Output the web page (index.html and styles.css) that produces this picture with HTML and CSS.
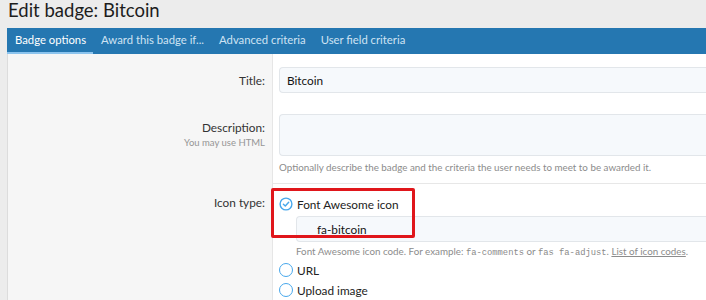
FILE: index.html
```html
<!DOCTYPE html>
<html lang="en">
<head>
    <meta charset="UTF-8">
    <meta name="viewport" content="width=device-width, initial-scale=1.0">
    <title>Edit badge: Bitcoin</title>
    <link rel="stylesheet" href="styles.css">
</head>
<body>
    <div class="page">
        <h1>Edit badge: Bitcoin</h1>
        <div class="block">
            <div class="tabs">
                <a class="tab active">Badge options</a>
                <a class="tab">Award this badge if...</a>
                <a class="tab">Advanced criteria</a>
                <a class="tab">User field criteria</a>
            </div>
            <div class="row row-title">
                <div class="label">Title:</div>
                <div class="field">
                    <input class="input" type="text" value="Bitcoin">
                </div>
            </div>
            <div class="row row-desc">
                <div class="label label-top">
                    Description:
                    <span class="hint">You may use HTML</span>
                </div>
                <div class="field">
                    <textarea class="input textarea"></textarea>
                    <div class="explain">Optionally describe the badge and the criteria the user needs to meet to be awarded it.</div>
                </div>
            </div>
            <div class="row row-icon">
                <div class="label label-radio">Icon type:</div>
                <div class="field">
                    <div class="highlight"></div>
                    <label class="choice">
                        <span class="radio checked">
                            <svg viewBox="0 0 14 14" width="14" height="14">
                                <circle cx="7" cy="7" r="5.9" fill="none" stroke="#47a7eb" stroke-width="1.4"/>
                                <path d="M4.4 7.2 L6.3 9 L9.7 5.2" fill="none" stroke="#47a7eb" stroke-width="1.4" stroke-linecap="round" stroke-linejoin="round"/>
                            </svg>
                        </span>
                        Font Awesome icon
                    </label>
                    <div class="dependent">
                        <input class="input input-icon" type="text" value="fa-bitcoin">
                        <div class="explain">Font Awesome icon code. For example: <code>fa-comments</code> or <code>fas fa-adjust</code>. <a class="link">List of icon codes</a>.</div>
                    </div>
                    <label class="choice">
                        <span class="radio"></span>
                        URL
                    </label>
                    <label class="choice">
                        <span class="radio"></span>
                        Upload image
                    </label>
                </div>
            </div>
        </div>
    </div>
</body>
</html>
```

FILE: styles.css
```css
body {
    margin: 0;
    background: #ececec;
    font-family: Lato, 'Noto Sans', sans-serif;
    color: #141414;
    overflow: hidden;
}
.page {
    padding: 0 0 0 7px;
}
h1 {
    font-size: 18.5px;
    font-weight: 400;
    margin: 0;
    padding: 0 0 0 1px;
    height: 28px;
    line-height: 21px;
    color: #1d1d1d;
}
.block {
    border-left: 1px solid #dcdcdc;
    background: linear-gradient(to right, #f6f6f6 264px, #e6e6e6 264px, #e6e6e6 265px, #fff 265px);
    min-height: 300px;
}
.tabs {
    display: flex;
    background: #2577b1;
    height: 26px;
    margin-left: -1px;
}
.tab {
    color: #cfe3f3;
    font-size: 11.3px;
    line-height: 24px;
    padding: 0 7px 0 8px;
    border-bottom: 2px solid transparent;
}
.tab.active {
    color: #fff;
    border-bottom-color: #8cc4ee;
}
.row {
    display: grid;
    grid-template-columns: 264px 1fr;
}
.label {
    text-align: right;
    padding-right: 7px;
    font-size: 11.8px;
    color: #333;
    display: flex;
    flex-direction: column;
    justify-content: center;
    align-items: flex-end;
}
.label-top {
    justify-content: flex-start;
    padding-top: 6px;
}
.label-radio {
    justify-content: flex-start;
    padding-top: 12px;
}
.hint {
    font-size: 9.5px;
    color: #959595;
    margin-top: 2px;
}
.field {
    padding: 0 0 0 7px;
    position: relative;
}
.row-title {
    padding: 13px 0 11px;
}
.row-desc {
    padding: 10px 0 10px;
}
.row-desc .field {
    border-bottom: 1px solid #e7e7e7;
    padding-bottom: 10px;
    margin-left: 1px;
    padding-left: 6px;
}
.row-desc .label {
    padding-bottom: 10px;
}
.row-icon {
    margin-top: -11px;
}
.row-icon .field {
    padding-top: 11px;
}
.input {
    display: block;
    box-sizing: border-box;
    width: 100%;
    height: 26px;
    border: 1px solid #e2e6ea;
    border-radius: 4px 0 0 4px;
    border-right: none;
    background: #f6f9fc;
    font-family: inherit;
    font-size: 11.8px;
    color: #141414;
    padding: 0 7px;
    outline: none;
}
.textarea {
    height: 42px;
    resize: none;
}
.explain {
    font-size: 9.8px;
    color: #8c8c8c;
    margin-top: 5px;
    white-space: nowrap;
}
code {
    font-family: 'Liberation Mono', 'DejaVu Sans Mono', monospace;
    font-size: 8.8px;
    color: #8a8a8a;
}
.link {
    color: #8c8c8c;
    text-decoration: underline;
}
.choice {
    display: flex;
    align-items: center;
    gap: 4px;
    font-size: 11.8px;
    color: #222;
    height: 20px;
}
.radio {
    width: 14px;
    height: 14px;
    box-sizing: border-box;
    border: 1.4px solid #47a7eb;
    border-radius: 50%;
    display: inline-block;
}
.radio.checked {
    border: none;
}
.radio svg {
    display: block;
}
.dependent {
    padding: 2px 0 0 17px;
}
.dependent .explain {
    margin-top: 2px;
    line-height: 14px;
}
.input-icon {
    padding-left: 20px;
}
.highlight {
    position: absolute;
    left: -1px;
    top: 5px;
    width: 144px;
    height: 50px;
    box-sizing: border-box;
    border: 3px solid #e0161b;
    border-radius: 2px;
    z-index: 2;
    pointer-events: none;
}
```
